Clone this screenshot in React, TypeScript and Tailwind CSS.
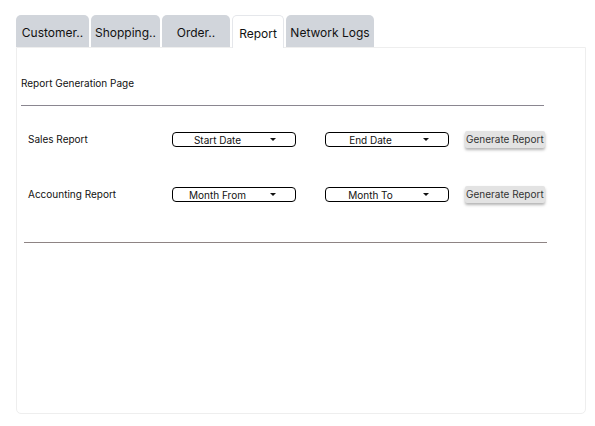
import React from 'react'

type Tab = { label: string, width: string, active?: boolean }

const tabs: Tab[] = [
    { label: 'Customer..', width: 'w-[73px]' },
    { label: 'Shopping..', width: 'w-[69px]' },
    { label: 'Order..', width: 'w-[68px]' },
    { label: 'Report', width: 'w-[52px]', active: true },
    { label: 'Network Logs', width: 'w-[88px]' },
]

function Caret() {
    return (
        <svg width="6" height="3" viewBox="0 0 6 3" className="shrink-0">
            <path d="M0 0 L6 0 L3 3 Z" fill="#111" />
        </svg>
    )
}

function Dropdown({ text }: { text: string }) {
    return (
        <div className="flex items-center w-[124px] h-[15px] border border-black rounded-[4px] bg-white">
            <span className="flex-1 text-center text-[10px] leading-none text-[#111]">{text}</span>
            <span className="ml-2 mr-[19px] flex items-center"><Caret /></span>
        </div>
    )
}

function ReportRow({ label, from, to }: { label: string, from: string, to: string }) {
    return (
        <div className="flex items-center h-[17px] pl-[11px]">
            <div className="w-[144px] text-[10px] text-[#111]">{label}</div>
            <Dropdown text={from} />
            <div className="ml-[29px]"><Dropdown text={to} /></div>
            <button className="ml-4 h-[17px] px-[1px] bg-[#e3e3e3] rounded-[2px] text-[10px] text-[#333] shadow-[0_2px_3px_rgba(0,0,0,0.3)]">
                Generate Report
            </button>
        </div>
    )
}

export default function App() {
    return (
        <div className="w-[595px] h-[426px] bg-white px-4 pt-[15px] font-[Inter,sans-serif]">
            <div className="flex gap-[2px] h-[32px]">
                {tabs.map((tab) => (
                    <div
                        key={tab.label}
                        className={`${tab.width} flex items-center justify-center pt-[4px] rounded-t-[5px] text-[12px] text-[#111] ${tab.active ? 'bg-white border border-b-0 border-[#e5e7eb] relative z-10 h-[33px]' : 'bg-[#d1d5db]'}`}
                    >
                        {tab.label}
                    </div>
                ))}
            </div>
            <div className="w-[570px] h-[367px] border border-[#eeeeee] rounded-b-[5px] pt-[28px]">
                <div className="pl-1 text-[10px] leading-[14px] text-[#111]">Report Generation Page</div>
                <div className="ml-1 mt-[15px] w-[523px] h-px bg-[#8a8690]"></div>
                <div className="mt-[25px]">
                    <ReportRow label="Sales Report" from="Start Date" to="End Date" />
                </div>
                <div className="mt-[38px]">
                    <ReportRow label="Accounting Report" from="Month From" to="Month To" />
                </div>
                <div className="ml-[7px] mt-[39px] w-[523px] h-px bg-[#8e8484]"></div>
            </div>
        </div>
    )
}
